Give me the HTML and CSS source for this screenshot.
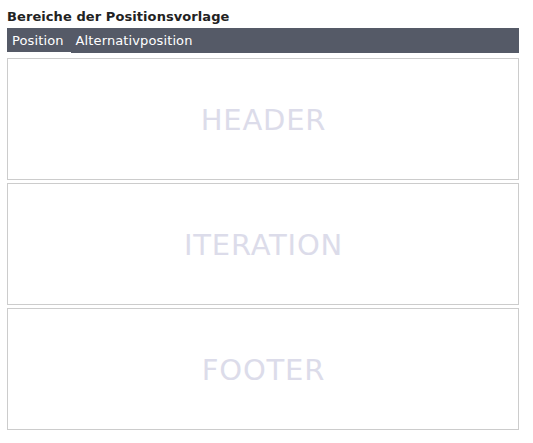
FILE: index.html
```html
<!DOCTYPE html>
<html>
<head>
<meta charset="utf-8">
<link rel="stylesheet" href="styles.css">
</head>
<body>
<div class="page">
  <h1 class="title">Bereiche der Positionsvorlage</h1>
  <div class="tabs">
    <span class="tab active">Position</span>
    <span class="tab">Alternativposition</span>
  </div>
  <div class="areas">
    <div class="area">HEADER</div>
    <div class="area">ITERATION</div>
    <div class="area">FOOTER</div>
  </div>
</div>
</body>
</html>
```

FILE: styles.css
```css
html, body {
  margin: 0;
  padding: 0;
  background: #ffffff;
}
.page {
  padding: 7px 14px 0 7px;
  font-family: "DejaVu Sans", sans-serif;
}
.title {
  margin: 0;
  font-size: 13px;
  font-weight: bold;
  letter-spacing: 0.08px;
  color: #222222;
  line-height: 19px;
  height: 21px;
}
.tabs {
  display: flex;
  background: #555a67;
  height: 25px;
  align-items: flex-start;
  margin-bottom: 5px;
}
.tab {
  color: #ffffff;
  font-size: 13px;
  letter-spacing: 0.12px;
  line-height: 24px;
  height: 24px;
  padding: 1px 5px 0 5px;
}
.tab.active {
  border-bottom: 1px solid #ffffff;
  height: 23px;
  padding-right: 7px;
}
.areas {
  display: flex;
  flex-direction: column;
  gap: 3px;
}
.area {
  height: 119px;
  padding-top: 1px;
  border: 1px solid #cccccc;
  display: flex;
  align-items: center;
  justify-content: center;
  font-size: 29px;
  letter-spacing: 0.8px;
  padding-left: 1px;
  color: #dcdcea;
}
```
